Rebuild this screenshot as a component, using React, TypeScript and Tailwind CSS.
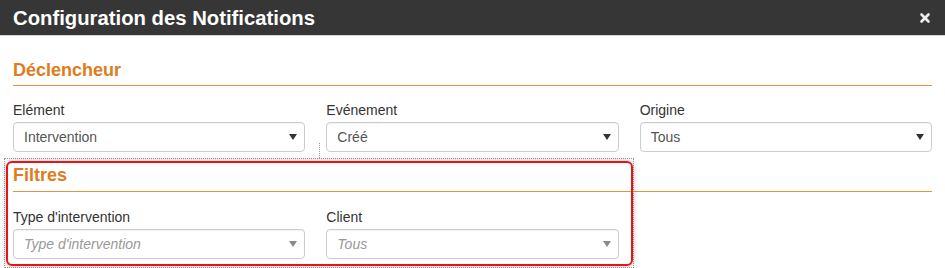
import { X } from "lucide-react"

interface SelectProps {
    label: string
    value: string
    placeholder?: boolean
}

function Caret({ light }: { light?: boolean }) {
    return (
        <svg width="8" height="6" viewBox="0 0 8 6" className="shrink-0">
            <path d="M0 0 L8 0 L4 6 Z" fill={light ? "#8a8a8a" : "#333333"} />
        </svg>
    )
}

function Field({ label, value, placeholder }: SelectProps) {
    return (
        <div className="flex flex-col">
            <label className="text-[14px] leading-[20px] text-[#333]">{label}</label>
            <div className="mt-[2px] flex h-[30px] items-center justify-between rounded-[4px] border border-[#cccccc] bg-white pl-[10px] pr-[7px] shadow-[inset_0_1px_1px_rgba(0,0,0,0.05)]">
                <span
                    className={
                        placeholder
                            ? "text-[14px] italic text-[#999]"
                            : "text-[14px] text-[#555]"
                    }
                >
                    {value}
                </span>
                <Caret light={placeholder} />
            </div>
        </div>
    )
}

export default function App() {
    return (
        <div className="relative h-[268px] w-[945px] overflow-hidden bg-white font-['Liberation_Sans',Arial,sans-serif]">
            {/* ── HEADER ── */}
            <div className="flex h-[36px] items-center justify-between border-b border-[#d5d5d5] bg-[#363636] pl-[13px] pr-[13px]">
                <h1 className="text-[20.3px] font-bold leading-[24px] text-white">
                    Configuration des Notifications
                </h1>
                <X className="h-[14px] w-[14px] text-[#eeeeee]" strokeWidth={4.5} />
            </div>

            <div className="px-[13px]">
                {/* ── DÉCLENCHEUR ── */}
                <h2 className="mt-[24px] border-b border-[#e8923a] pb-[5px] text-[18px] font-bold leading-[20px] text-[#e07b20]">
                    Déclencheur
                </h2>
                <div className="mt-[14px] grid grid-cols-3 gap-x-[21px]">
                    <Field label="Elément" value="Intervention" />
                    <Field label="Evénement" value="Créé" />
                    <Field label="Origine" value="Tous" />
                </div>

                {/* ── FILTRES ── */}
                <h2 className="mt-[13px] border-b border-[#e8923a] pb-[6px] text-[18px] font-bold leading-[20px] text-[#e07b20]">
                    Filtres
                </h2>
                <div className="mt-[15px] grid grid-cols-3 gap-x-[21px]">
                    <Field label="Type d'intervention" value="Type d'intervention" placeholder />
                    <Field label="Client" value="Tous" placeholder />
                </div>
            </div>

            {/* ── surlignage de la zone filtres ── */}
            <div className="pointer-events-none absolute left-[319px] top-[143px] h-[15px] border-l border-dotted border-[#9a9a9a]" />
            <div className="pointer-events-none absolute left-[4px] top-[158px] h-[110px] w-[630px] border border-dotted border-[#9a9a9a]" />
            <div className="pointer-events-none absolute left-[6px] top-[161px] h-[105px] w-[627px] rounded-[6px] border-2 border-[#ee1111] shadow-[0_0_6px_rgba(0,0,0,0.25)]" />
        </div>
    )
}
